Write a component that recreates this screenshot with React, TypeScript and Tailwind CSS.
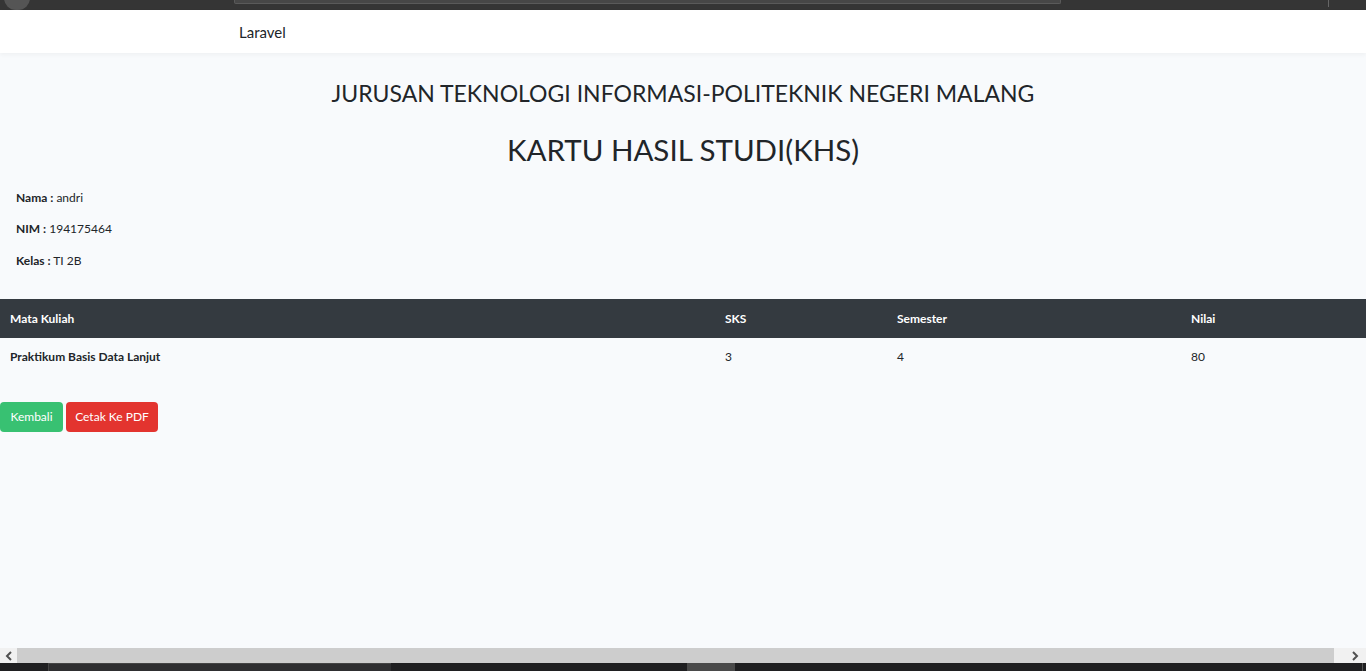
const rows = [
  { matkul: 'Praktikum Basis Data Lanjut', sks: 3, semester: 4, nilai: 80 },
];

function Chevron({ dir }: { dir: 'left' | 'right' }) {
  return (
    <svg width="8" height="10" viewBox="0 0 8 10" fill="none" stroke="#505050" strokeWidth={2}>
      <path d={dir === 'left' ? 'M6 1L2 5l4 4' : 'M2 1l4 4-4 4'} />
    </svg>
  );
}

export default function App() {
  return (
    <div
      className="flex h-[671px] w-[1366px] flex-col overflow-hidden bg-[#f8fafc] text-[#212529]"
      style={{ fontFamily: 'Lato, "Open Sans", sans-serif' }}
    >
      {/* browser chrome strip */}
      <div className="relative h-[10px] shrink-0 bg-[#353535]">
        <div className="absolute left-[4px] top-[-14px] h-[24px] w-[26px] rounded-full bg-[#555]" />
        <div className="absolute left-[234px] top-0 h-[4px] w-[827px] rounded-b-[2px] border border-t-0 border-[#5a5a5a] bg-[#474747]" />
        <div className="absolute left-[1328px] top-0 h-[7px] w-px bg-[#666]" />
      </div>

      {/* navbar */}
      <nav className="relative z-10 flex h-[43px] shrink-0 items-center bg-white pl-[239px] pt-[2px] shadow-[0_2px_4px_rgba(0,0,0,0.04)]">
        <span className="text-[15px] text-[#212529]">Laravel</span>
      </nav>

      <main className="flex-1 pt-[25px]">
        <h3 className="text-center text-[23px] leading-[30px] text-[#212529]">
          JURUSAN TEKNOLOGI INFORMASI-POLITEKNIK NEGERI MALANG
        </h3>
        <h2 className="mt-[24px] text-center text-[29.5px] leading-[36px] text-[#212529]">
          KARTU HASIL STUDI(KHS)
        </h2>

        <div className="mt-[20px] px-[16px] text-[12px] leading-[20px]">
          <p className="mb-[11px]"><b>Nama :</b> andri</p>
          <p className="mb-[12px]"><b>NIM :</b> 194175464</p>
          <p><b>Kelas :</b> TI 2B</p>
        </div>

        {/* table */}
        <div className="mt-[28px] text-[12px]">
          <div className="grid h-[39px] grid-cols-[715px_172px_294px_1fr] items-center bg-[#343a40] font-bold text-white">
            <div className="pl-[10px]">Mata Kuliah</div>
            <div className="pl-[10px]">SKS</div>
            <div className="pl-[10px]">Semester</div>
            <div className="pl-[10px]">Nilai</div>
          </div>
          {rows.map((r) => (
            <div key={r.matkul} className="grid h-[38px] grid-cols-[715px_172px_294px_1fr] items-center">
              <div className="pl-[10px] font-bold">{r.matkul}</div>
              <div className="pl-[10px]">{r.sks}</div>
              <div className="pl-[10px]">{r.semester}</div>
              <div className="pl-[10px]">{r.nilai}</div>
            </div>
          ))}
        </div>

        <div className="mt-[26px] flex gap-[3px]">
          <button className="h-[30px] w-[63px] rounded-[4px] bg-[#38c172] text-[12px] text-white">Kembali</button>
          <button className="h-[30px] w-[92px] rounded-[4px] bg-[#e3342f] text-[12px] text-white">Cetak Ke PDF</button>
        </div>
      </main>

      {/* horizontal scrollbar */}
      <div className="flex h-[15px] shrink-0 items-center bg-[#f1f1f1]">
        <span className="flex w-[17px] items-center justify-center">
          <Chevron dir="left" />
        </span>
        <div className="h-full flex-1 bg-[#cdcdcd]" />
        <span className="flex w-[32px] items-center justify-end pr-[7px]">
          <Chevron dir="right" />
        </span>
      </div>

      {/* taskbar strip */}
      <div className="relative h-[8px] shrink-0 bg-[#1f1f21]">
        <div className="absolute left-[48px] top-0 h-full w-[343px] border-l border-t border-[#444] bg-[#2e2e30]" />
        <div className="absolute left-[687px] top-0 h-full w-[48px] bg-[#4a4a4a]" />
        <div className="absolute left-[1362px] top-0 h-full w-px bg-[#555]" />
      </div>
    </div>
  );
}
